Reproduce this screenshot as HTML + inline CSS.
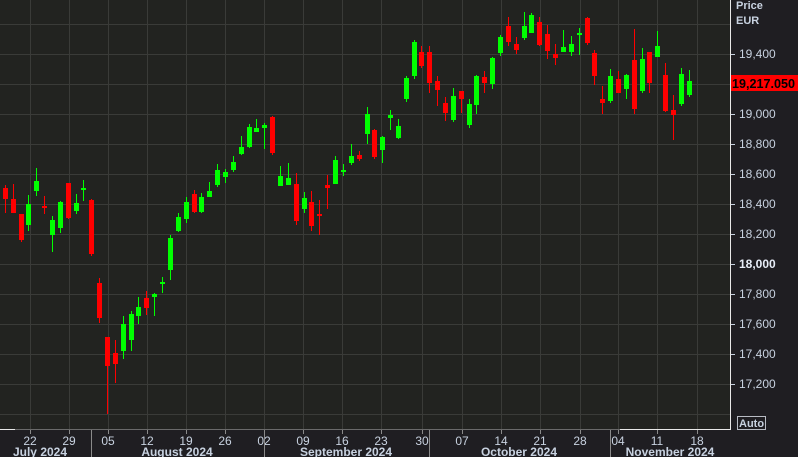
<!DOCTYPE html>
<html><head><meta charset="utf-8"><style>
html,body{margin:0;padding:0;background:#1f1e22;width:798px;height:457px;overflow:hidden}
svg{display:block;font-family:"Liberation Sans",Arial,sans-serif}
</style></head><body>
<svg id="s" width="798" height="457" xmlns="http://www.w3.org/2000/svg">
<rect x="0" y="0" width="798" height="457" fill="#1f1e22"/>
<rect x="0" y="0" width="730" height="429" fill="#222320"/>
<g id="grid" stroke="#3a3b38" stroke-width="1"></g>
<g id="c"></g>
<line x1="730.5" y1="0" x2="730.5" y2="429" stroke="#e8e8e8"/>
<line x1="0" y1="429.5" x2="730" y2="429.5" stroke="#6a6a6a"/>
<line x1="0" y1="429.5" x2="15" y2="429.5" stroke="#e8e8e8"/>
<line x1="620" y1="429.5" x2="731" y2="429.5" stroke="#e8e8e8"/>
<g id="ax" fill="#c8d2e0" font-size="12"></g>
<text x="736" y="9" fill="#c8d2e0" font-size="11" font-weight="bold">Price</text>
<text x="736" y="24" fill="#c8d2e0" font-size="11" font-weight="bold">EUR</text>
<rect x="731" y="75" width="67" height="16" fill="#ff0000"/>
<text x="732" y="88" fill="#000" font-size="13" font-weight="bold" textLength="63" lengthAdjust="spacingAndGlyphs">19,217.050</text>
<rect x="737.5" y="416.5" width="28" height="13" fill="none" stroke="#b8bcc4"/>
<text x="739" y="427" fill="#c8d2e0" font-size="11" font-weight="bold">Auto</text>
</svg>
<script>
var NS="http://www.w3.org/2000/svg";
function el(p,t,a,txt){var e=document.createElementNS(NS,t);for(var k in a)e.setAttribute(k,a[k]);if(txt)e.textContent=txt;p.appendChild(e);return e;}
var g=document.getElementById('grid'),ax=document.getElementById('ax'),c=document.getElementById('c');
var xs=[30,69,108,147,186,225,264,303,342,381,422,462,501,540,580,618,657,697];
var ds=["22","29","05","12","19","26","02","09","16","23","30","07","14","21","28","04","11","18"];
xs.forEach(function(x,i){el(g,'line',{x1:x+.5,y1:0,x2:x+.5,y2:429});
el(ax,'line',{x1:x+.5,y1:430,x2:x+.5,y2:434,stroke:'#8a8a8a'});
el(ax,'text',{x:x,y:445,'text-anchor':'middle'},ds[i]);});
for(var k=0;k<14;k++){var y=24+30*k;el(g,'line',{x1:0,y1:y+.5,x2:730,y2:y+.5});}
for(var p=17200;p<=19400;p+=200){var y=54+(19400-p)*0.15;
el(ax,'line',{x1:731,y1:y+.5,x2:735,y2:y+.5,stroke:'#c8d2e0'});
var t=el(ax,'text',{x:739,y:y+4},(p+"").replace(/(\d\d)(\d\d\d)$/,"$1,$2"));
if(p==18000){t.setAttribute('font-weight','bold');t.setAttribute('fill','#e8eef8');}}
[91,264,429,610].forEach(function(x){el(ax,'line',{x1:x+.5,y1:430,x2:x+.5,y2:457,stroke:'#8a8a8a'});});
[["July 2024",40],["August 2024",177],["September 2024",346],["October 2024",519],["November 2024",670]].forEach(function(m){
el(ax,'text',{x:m[1],y:456,'text-anchor':'middle','font-weight':'bold'},m[0]);});
var d=[[5,185,213,188,199,0],[13,184,213,199,213,0],[21,214,242,214,240,0],[28,195,231,204,225,1],[36,168,196,181,191,1],[44,196,214,206,208,0],[52,216,252,220,235,1],[60,201,233,202,228,1],[68,183,219,183,218,0],[76,194,214,203,211,1],[83,180,201,188,190,1],[91,199,256,200,254,0],[99,278,323,283,318,0],[107,337,414,337,366,0],[115,340,383,353,364,0],[123,316,359,324,351,1],[131,311,351,314,340,1],[138,297,324,307,316,1],[146,291,315,298,308,0],[154,293,316,294,297,1],[162,277,293,282,284,1],[170,235,280,238,270,1],[178,213,232,217,231,1],[186,197,223,202,219,1],[194,190,213,194,212,0],[201,193,213,197,212,1],[209,182,197,191,197,1],[217,164,187,170,185,1],[225,169,183,172,177,1],[233,156,172,162,170,1],[241,136,155,147,154,1],[249,124,148,127,147,1],[256,119,132,128,132,1],[264,123,149,125,128,1],[272,116,155,117,153,0],[280,166,186,176,186,1],[288,163,185,178,185,1],[296,173,225,184,221,0],[304,192,213,198,209,1],[311,191,231,202,226,0],[319,200,235,214,216,0],[327,175,209,185,188,0],[335,156,184,160,184,1],[343,164,176,170,172,1],[351,144,165,156,163,1],[359,151,161,155,159,0],[367,107,144,114,134,1],[374,129,159,130,157,0],[382,136,163,137,150,1],[390,110,130,115,118,1],[398,119,139,126,138,1],[406,76,102,78,99,1],[414,40,79,42,76,1],[421,46,68,52,66,0],[429,46,93,52,83,0],[437,76,106,81,90,0],[445,97,121,103,113,0],[453,88,122,96,120,1],[461,91,113,91,99,0],[469,99,128,104,125,1],[476,75,114,76,105,1],[484,71,93,77,83,0],[492,57,89,58,84,1],[500,35,56,37,53,1],[508,17,46,26,42,0],[516,37,54,44,50,0],[524,12,40,26,38,1],[531,13,33,15,33,1],[539,17,46,22,45,0],[547,25,59,34,51,0],[555,44,65,54,58,0],[563,30,52,47,52,1],[571,36,56,44,52,1],[579,28,55,33,35,1],[587,17,45,18,43,0],[594,50,85,53,76,0],[602,86,114,99,103,0],[610,69,103,76,101,1],[618,71,93,79,93,0],[626,74,99,75,89,1],[634,29,114,60,109,0],[642,48,93,59,91,1],[649,52,93,52,83,0],[657,31,57,46,57,1],[665,63,112,75,111,0],[673,95,140,110,115,0],[681,68,106,74,104,1],[689,70,97,81,95,1]];
d.forEach(function(a){var col=a[5]?'#00ff00':'#ff0000';
el(c,'rect',{x:a[0],y:a[1],width:1,height:a[2]-a[1],fill:col});
el(c,'rect',{x:a[0]-2,y:a[3],width:5,height:Math.max(2,a[4]-a[3]),fill:col});});
</script>
</body></html>
